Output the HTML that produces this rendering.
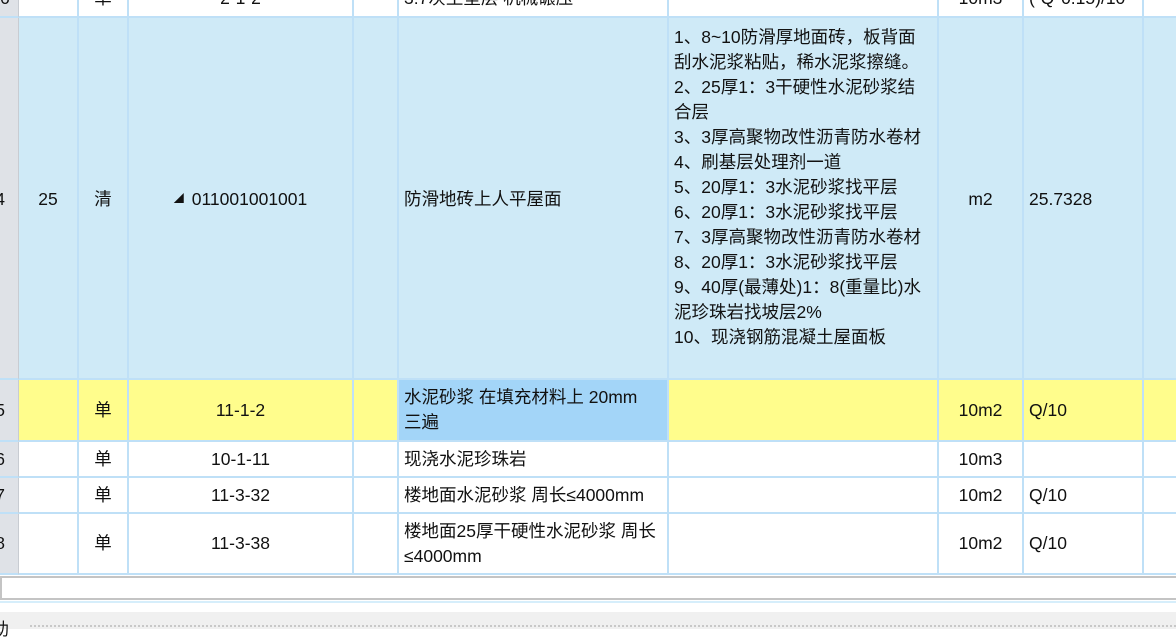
<!DOCTYPE html>
<html><head><meta charset="utf-8"><style>
body{margin:0;width:1176px;height:629px;overflow:hidden;background:#fff;position:relative;font-family:"Liberation Sans","Noto Sans CJK SC",sans-serif;font-size:17.5px;color:#111;}
.c{position:absolute;box-sizing:border-box;border-right:2px solid #bfe0f7;border-bottom:2px solid #bfe0f7;display:flex;align-items:center;line-height:25px;overflow:hidden;white-space:nowrap}
.ct{justify-content:center}
.l{padding-left:5px}
.g{background:#dfe2e7;border-right:1px solid #c8ccd2}
.b{background:#cfeaf7}
.y{background:#fffd8c}
</style></head><body>
<!-- row0 -->
<div class="c g" style="left:0;top:-20px;width:19px;height:38px">6</div>
<div class="c" style="left:19px;top:-20px;width:60px;height:38px"></div>
<div class="c ct" style="left:79px;top:-20px;width:50px;height:38px">单</div>
<div class="c ct" style="left:129px;top:-20px;width:225px;height:38px">2-1-2</div>
<div class="c" style="left:354px;top:-20px;width:45px;height:38px"></div>
<div class="c l" style="left:399px;top:-20px;width:270px;height:38px">3:7灰土垫层 机械碾压</div>
<div class="c" style="left:669px;top:-20px;width:270px;height:38px"></div>
<div class="c ct" style="left:939px;top:-20px;width:85px;height:38px">10m3</div>
<div class="c l" style="left:1024px;top:-20px;width:120px;height:38px">(-Q*0.15)/10</div>
<div class="c" style="left:1144px;top:-20px;width:40px;height:38px"></div>
<!-- row1 -->
<div class="c g" style="left:0;top:18px;width:19px;height:362px;justify-content:flex-end;padding-right:13px;padding-top:2px">4</div>
<div class="c b ct" style="left:19px;top:18px;width:60px;height:362px;padding-top:2px">25</div>
<div class="c b ct" style="left:79px;top:18px;width:50px;height:362px;padding-top:2px">清</div>
<div class="c b ct" style="left:129px;top:18px;width:225px;height:362px;padding-top:2px"><span style="font-size:10px;margin-right:8px">&#9698;</span>011001001001</div>
<div class="c b" style="left:354px;top:18px;width:45px;height:362px"></div>
<div class="c b l" style="left:399px;top:18px;width:270px;height:362px;padding-top:2px">防滑地砖上人平屋面</div>
<div class="c b l" style="left:669px;top:18px;width:270px;height:362px;align-items:flex-start;padding-top:7px"><div>1、8~10防滑厚地面砖，板背面<br>刮水泥浆粘贴，稀水泥浆擦缝。<br>2、25厚1：3干硬性水泥砂浆结<br>合层<br>3、3厚高聚物改性沥青防水卷材<br>4、刷基层处理剂一道<br>5、20厚1：3水泥砂浆找平层<br>6、20厚1：3水泥砂浆找平层<br>7、3厚高聚物改性沥青防水卷材<br>8、20厚1：3水泥砂浆找平层<br>9、40厚(最薄处)1：8(重量比)水<br>泥珍珠岩找坡层2%<br>10、现浇钢筋混凝土屋面板</div></div>
<div class="c b ct" style="left:939px;top:18px;width:85px;height:362px;padding-top:2px">m2</div>
<div class="c b l" style="left:1024px;top:18px;width:120px;height:362px;padding-top:2px">25.7328</div>
<div class="c b" style="left:1144px;top:18px;width:40px;height:362px"></div>
<!-- row2 -->
<div class="c g" style="left:0;top:380px;width:19px;height:62px;justify-content:flex-end;padding-right:13px">5</div>
<div class="c y" style="left:19px;top:380px;width:60px;height:62px"></div>
<div class="c y ct" style="left:79px;top:380px;width:50px;height:62px">单</div>
<div class="c y ct" style="left:129px;top:380px;width:225px;height:62px">11-1-2</div>
<div class="c y" style="left:354px;top:380px;width:45px;height:62px"></div>
<div class="c l" style="left:399px;top:380px;width:270px;height:62px;background:#a3d5f8"><div>水泥砂浆 在填充材料上 20mm<br>三遍</div></div>
<div class="c y" style="left:669px;top:380px;width:270px;height:62px"></div>
<div class="c y ct" style="left:939px;top:380px;width:85px;height:62px">10m2</div>
<div class="c y l" style="left:1024px;top:380px;width:120px;height:62px">Q/10</div>
<div class="c y" style="left:1144px;top:380px;width:40px;height:62px"></div>
<!-- row3 -->
<div class="c g" style="left:0;top:442px;width:19px;height:36px;justify-content:flex-end;padding-right:13px">6</div>
<div class="c" style="left:19px;top:442px;width:60px;height:36px"></div>
<div class="c ct" style="left:79px;top:442px;width:50px;height:36px">单</div>
<div class="c ct" style="left:129px;top:442px;width:225px;height:36px">10-1-11</div>
<div class="c" style="left:354px;top:442px;width:45px;height:36px"></div>
<div class="c l" style="left:399px;top:442px;width:270px;height:36px">现浇水泥珍珠岩</div>
<div class="c" style="left:669px;top:442px;width:270px;height:36px"></div>
<div class="c ct" style="left:939px;top:442px;width:85px;height:36px">10m3</div>
<div class="c l" style="left:1024px;top:442px;width:120px;height:36px"></div>
<div class="c" style="left:1144px;top:442px;width:40px;height:36px"></div>
<!-- row4 -->
<div class="c g" style="left:0;top:478px;width:19px;height:36px;justify-content:flex-end;padding-right:13px">7</div>
<div class="c" style="left:19px;top:478px;width:60px;height:36px"></div>
<div class="c ct" style="left:79px;top:478px;width:50px;height:36px">单</div>
<div class="c ct" style="left:129px;top:478px;width:225px;height:36px">11-3-32</div>
<div class="c" style="left:354px;top:478px;width:45px;height:36px"></div>
<div class="c l" style="left:399px;top:478px;width:270px;height:36px">楼地面水泥砂浆 周长≤4000mm</div>
<div class="c" style="left:669px;top:478px;width:270px;height:36px"></div>
<div class="c ct" style="left:939px;top:478px;width:85px;height:36px">10m2</div>
<div class="c l" style="left:1024px;top:478px;width:120px;height:36px">Q/10</div>
<div class="c" style="left:1144px;top:478px;width:40px;height:36px"></div>
<!-- row5 -->
<div class="c g" style="left:0;top:514px;width:19px;height:61px;justify-content:flex-end;padding-right:13px">8</div>
<div class="c" style="left:19px;top:514px;width:60px;height:61px"></div>
<div class="c ct" style="left:79px;top:514px;width:50px;height:61px">单</div>
<div class="c ct" style="left:129px;top:514px;width:225px;height:61px">11-3-38</div>
<div class="c" style="left:354px;top:514px;width:45px;height:61px"></div>
<div class="c l" style="left:399px;top:514px;width:270px;height:61px"><div>楼地面25厚干硬性水泥砂浆 周长<br>≤4000mm</div></div>
<div class="c" style="left:669px;top:514px;width:270px;height:61px"></div>
<div class="c ct" style="left:939px;top:514px;width:85px;height:61px">10m2</div>
<div class="c l" style="left:1024px;top:514px;width:120px;height:61px">Q/10</div>
<div class="c" style="left:1144px;top:514px;width:40px;height:61px"></div>
<!-- scrollbar -->
<div style="position:absolute;left:0;top:576px;width:1180px;height:24px;box-sizing:border-box;border:2px solid #c4c4c4;border-right:none;background:#fff"></div>
<div style="position:absolute;left:0;top:601px;width:1176px;height:2px;background:#d6eefb"></div>
<div style="position:absolute;left:0;top:612px;width:1176px;height:17px;background:#f0f0f0"></div>
<div style="position:absolute;left:30px;top:625px;width:1146px;border-top:2px dotted #c8c8c8"></div>
<div style="position:absolute;left:-8px;top:620px;font-size:17px;line-height:20px">助</div>
</body></html>
